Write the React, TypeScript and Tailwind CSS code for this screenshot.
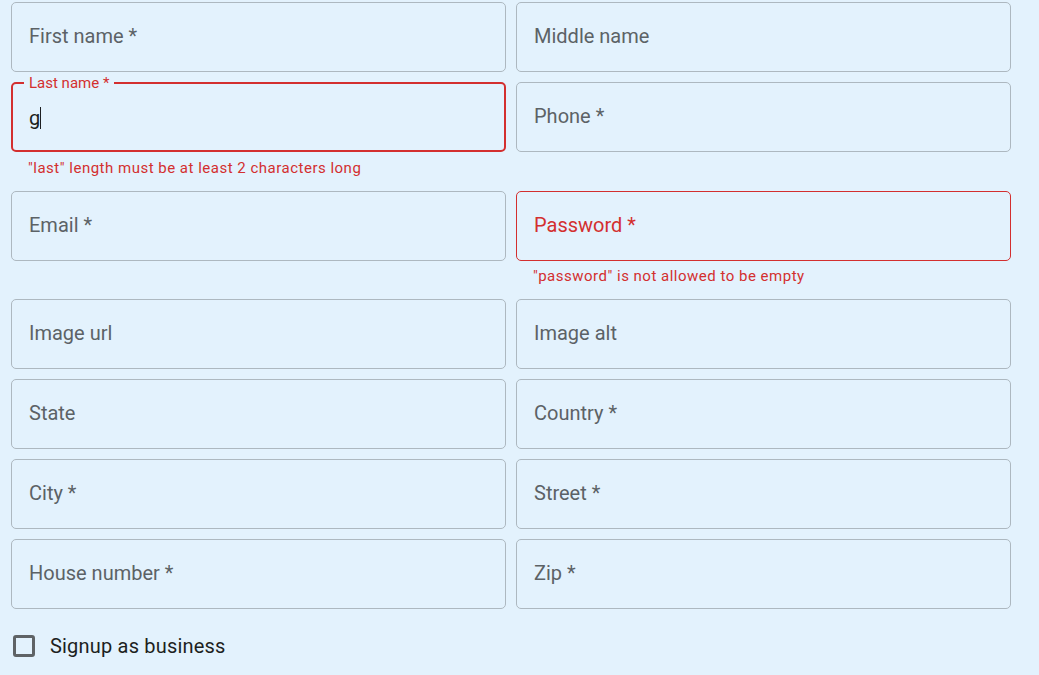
import React from "react";

type Field = {
    label: string;
    value?: string;
    error?: string;
    focused?: boolean;
    invalid?: boolean;
};

const rows: [Field, Field][] = [
    [{ label: "First name *" }, { label: "Middle name" }],
    [
        { label: "Last name *", value: "g", focused: true, invalid: true, error: "\"last\" length must be at least 2 characters long" },
        { label: "Phone *" },
    ],
    [
        { label: "Email *" },
        { label: "Password *", invalid: true, error: "\"password\" is not allowed to be empty" },
    ],
    [{ label: "Image url" }, { label: "Image alt" }],
    [{ label: "State" }, { label: "Country *" }],
    [{ label: "City *" }, { label: "Street *" }],
    [{ label: "House number *" }, { label: "Zip *" }],
];

function HelperText({ text }: { text: string }) {
    return (
        <p className="mt-[3.75px] ml-[17px] text-[15px] leading-[24.9px] tracking-[0.5px] text-[#d32f2f]">{text}</p>
    );
}

function TextField({ field }: { field: Field }) {
    if (field.focused) {
        return (
            <div className="flex flex-col">
                <div className="relative h-[70px] rounded-[5px] border-2 border-[#d32f2f] flex items-center pl-[16px]">
                    <span className="absolute -top-[11px] left-[11px] px-[5px] bg-[#e3f2fd] text-[15px] leading-[20px] text-[#d32f2f]">
                        {field.label}
                    </span>
                    <span className="text-[20px] text-[#1d1f21] mt-[1px]">{field.value}</span>
                    <span className="w-px h-[22px] bg-[#1d1f21] mt-[1px]"></span>
                </div>
                {field.error && <HelperText text={field.error} />}
            </div>
        );
    }

    return (
        <div className="flex flex-col">
            <div
                className={
                    field.invalid
                        ? "h-[70px] rounded-[5px] border border-[#d32f2f] flex items-center pl-[17px]"
                        : "h-[70px] rounded-[5px] border border-[#adb8c0] flex items-center pl-[17px]"
                }
            >
                <span className={field.invalid ? "text-[20px] text-[#d32f2f] -mt-[2px]" : "text-[20px] text-[#5c6266] -mt-[2px]"}>
                    {field.label}
                </span>
            </div>
            {field.error && <HelperText text={field.error} />}
        </div>
    );
}

export default function App() {
    return (
        <div className="min-h-screen bg-[#e3f2fd] pt-[2px] pl-[11px] font-['Roboto',sans-serif]">
            <div className="w-[1000px] grid grid-cols-2 gap-x-[10px] gap-y-[10px] items-start">
                {rows.map((row, i) => (
                    <React.Fragment key={i}>
                        <TextField field={row[0]} />
                        <TextField field={row[1]} />
                    </React.Fragment>
                ))}
            </div>

            {/* business checkbox */}
            <label className="flex items-center gap-[15px] mt-[22px] ml-[2px]">
                <span className="w-[22px] h-[22px] rounded-[3px] border-[3px] border-[#5f6366]"></span>
                <span className="text-[20px] tracking-[0.19px] text-[#1d1f21]">Signup as business</span>
            </label>
        </div>
    );
}
